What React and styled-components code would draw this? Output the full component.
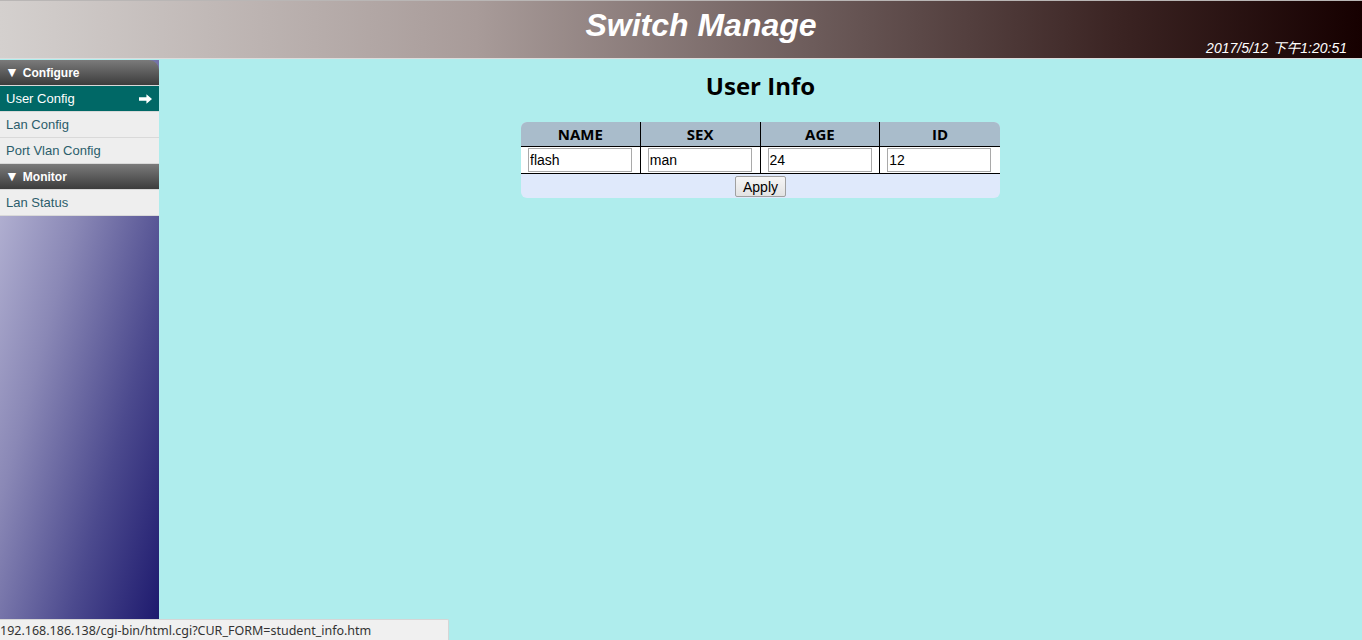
import React, { useState } from 'react'
import styled, { createGlobalStyle } from 'styled-components'

const GlobalStyle = createGlobalStyle`
html, body {
  margin : 0;
  padding : 0;
  height : 100%;
}
body {
  font-family : "Liberation Sans", Arial, sans-serif;
  background : #afeded;
  overflow : hidden;
}
#root {
  height : 100%;
}
`

const columns = ['NAME', 'SEX', 'AGE', 'ID']

function App() {
  const [values, setValues] = useState({ NAME: 'flash', SEX: 'man', AGE: '24', ID: '12' })
  const [active, setActive] = useState('User Config')

  const menu = [
    { title: 'Configure', items: ['User Config', 'Lan Config', 'Port Vlan Config'] },
    { title: 'Monitor', items: ['Lan Status'] },
  ]

  return (
    <Page>
      <GlobalStyle />
      <Header>
        <Title>Switch Manage</Title>
        <Clock>2017/5/12 下午1:20:51</Clock>
      </Header>
      <Body>
        <Sidebar>
          {menu.map((group, gi) => (
            <Group key={group.title}>
              <GroupTitle first={gi === 0}><Tri>▼</Tri>{group.title}</GroupTitle>
              {group.items.map(item => (
                <Item key={item} selected={active === item} onClick={() => setActive(item)}>
                  {item}
                  {active === item && (
                    <Arrow viewBox="0 0 14 10">
                      <path d="M0 3h8V0l6 5-6 5V7H0z" fill="#fff" />
                    </Arrow>
                  )}
                </Item>
              ))}
            </Group>
          ))}
        </Sidebar>
        <Main>
          <Heading>User Info</Heading>
          <Table>
            <HeadRow>
              {columns.map((c, i) => (
                <HeadCell key={c} last={i === columns.length - 1}>{c}</HeadCell>
              ))}
            </HeadRow>
            <InputRow>
              {columns.map((c, i) => (
                <InputCell key={c} last={i === columns.length - 1}>
                  <Field
                    value={values[c]}
                    onChange={e => setValues({ ...values, [c]: e.target.value })}
                  />
                </InputCell>
              ))}
            </InputRow>
            <ApplyRow>
              <ApplyButton>Apply</ApplyButton>
            </ApplyRow>
          </Table>
        </Main>
      </Body>
      <StatusBar>192.168.186.138/cgi-bin/html.cgi?CUR_FORM=student_info.htm</StatusBar>
    </Page>
  )
}

export default App

const Page = styled.div`
position : relative;
height : 640px;
display : flex;
flex-direction : column;
`

const Header = styled.div`
height : 57px;
border-top : 1px solid #b9b6b5;
border-bottom : 1px solid #dcdcdc;
background : linear-gradient(to right, #d4d0ce 0%, #a89b99 35%, #6c5b5a 60%, #3b2423 82%, #160000 100%);
display : flex;
justify-content : center;
align-items : flex-start;
padding-left : 40px;
position : relative;
`

const Title = styled.h1`
margin : 6px 0 0 0;
color : #fff;
font-family : "Liberation Sans", Arial, sans-serif;
font-style : italic;
font-weight : bold;
font-size : 32px;
line-height : 36px;
`

const Clock = styled.div`
position : absolute;
right : 15px;
bottom : 1px;
color : #fff;
font-style : italic;
font-size : 14px;
font-family : "Liberation Sans", "Noto Sans CJK SC", sans-serif;
`

const Body = styled.div`
flex : 1;
display : flex;
padding-top : 1px;
`

const Sidebar = styled.div`
width : 159px;
background : linear-gradient(to bottom right, #c4c3de 0%, #8a88b6 38%, #4c4a8e 70%, #1b176c 100%);
`

const Group = styled.div`
display : flex;
flex-direction : column;
`

const GroupTitle = styled.div`
height : 25px;
line-height : 24px;
padding-left : 5px;
color : #fff;
font-weight : bold;
font-size : 12px;
background : linear-gradient(to bottom, #7b7b7b, #3c3c3c);
border-top-right-radius : ${props => props.first ? '10px' : '0'};
border-bottom : 1px solid #d8d8d8;
`

const Tri = styled.span`
font-size : 14px;
margin-right : 4px;
`

const Item = styled.div`
height : 25px;
line-height : 25px;
padding : 0 6px;
font-size : 13px;
display : flex;
justify-content : space-between;
align-items : center;
cursor : pointer;
color : ${props => props.selected ? '#fff' : '#2b5d6b'};
background : ${props => props.selected ? '#006866' : '#eeeeee'};
border-bottom : 1px solid #d9d9d9;
`

const Arrow = styled.svg`
width : 13px;
height : 10px;
margin-right : 1px;
`

const Main = styled.div`
flex : 1;
display : flex;
flex-direction : column;
align-items : center;
background : #afeded;
`

const Heading = styled.h2`
margin : 12px 0 22px 0;
font-family : "Open Sans", "Noto Sans", sans-serif;
font-weight : bold;
font-size : 24px;
line-height : 28px;
color : #000;
`

const Table = styled.div`
width : 479px;
border-radius : 6px;
overflow : hidden;
background : #dfe9fb;
`

const HeadRow = styled.div`
display : grid;
grid-template-columns : repeat(4, 1fr);
background : #a9bccb;
border-bottom : 1px solid #000;
`

const HeadCell = styled.div`
height : 24px;
line-height : 25px;
text-align : center;
font-family : "Open Sans", "Noto Sans", sans-serif;
font-weight : bold;
font-size : 15px;
border-right : ${props => props.last ? 'none' : '1px solid #000'};
`

const InputRow = styled.div`
display : grid;
grid-template-columns : repeat(4, 1fr);
background : #fff;
border-bottom : 1px solid #000;
`

const InputCell = styled.div`
height : 26px;
padding : 1px 0 0 7px;
box-sizing : border-box;
border-right : ${props => props.last ? 'none' : '1px solid #000'};
`

const Field = styled.input`
width : 104px;
height : 24px;
box-sizing : border-box;
border : 1px solid #a9a9a9;
padding : 0 1px;
font-family : "Liberation Sans", Arial, sans-serif;
font-size : 14px;
color : #000;
outline : none;
`

const ApplyRow = styled.div`
height : 24px;
display : flex;
justify-content : center;
align-items : flex-start;
padding-top : 2px;
box-sizing : border-box;
`

const ApplyButton = styled.button`
height : 21px;
padding : 0 7px;
font-family : "Liberation Sans", Arial, sans-serif;
font-size : 14px;
color : #000;
background : linear-gradient(to bottom, #f6f6f6, #e2e2e2);
border : 1px solid #a0a0a0;
border-radius : 2px;
`

const StatusBar = styled.div`
position : absolute;
left : 0;
bottom : 0;
width : 448px;
height : 20px;
line-height : 21px;
font-family : "Noto Sans", "Open Sans", sans-serif;
font-size : 12.5px;
color : #333;
background : #f0f0f0;
border-top : 1px solid #d6d6d6;
border-right : 1px solid #d6d6d6;
border-top-right-radius : 2px;
white-space : nowrap;
`
